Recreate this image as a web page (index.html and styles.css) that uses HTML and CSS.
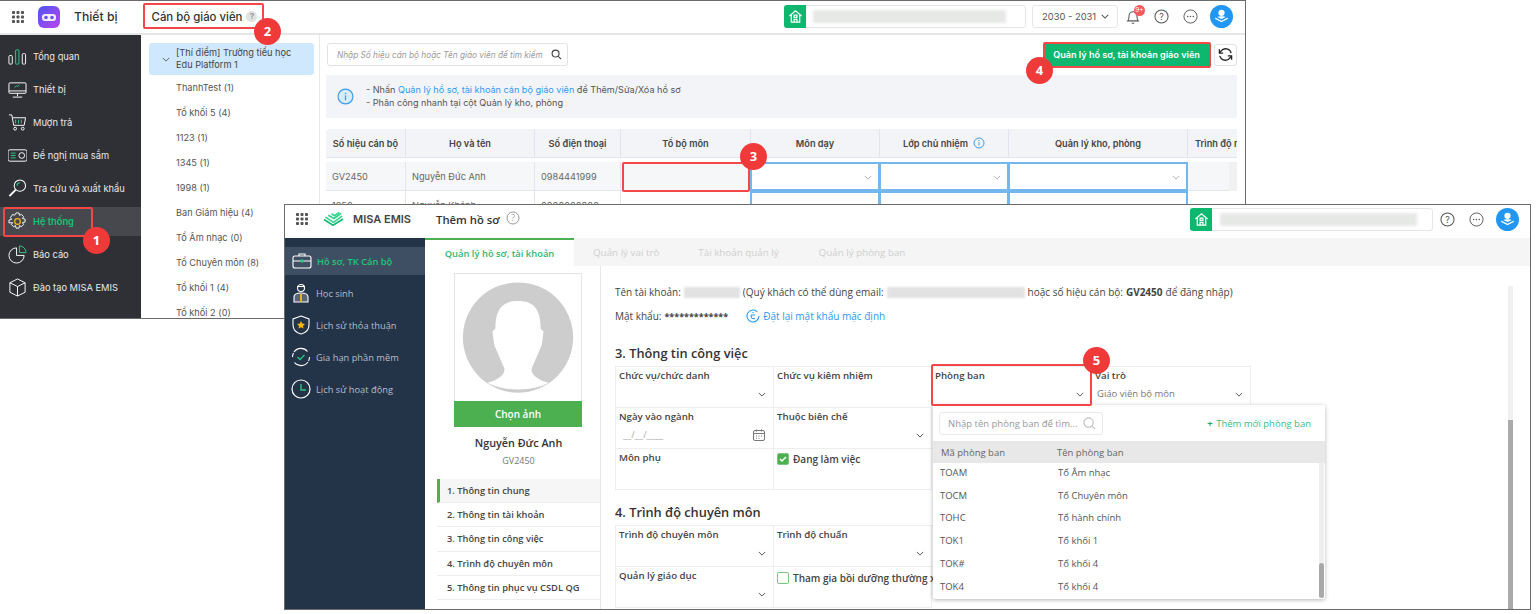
FILE: index.html
```html
<!DOCTYPE html>
<html lang="vi">
<head>
  <meta charset="UTF-8">
  <meta name="viewport" content="width=device-width, initial-scale=1.0">
  <title>Cán bộ giáo viên - Thêm hồ sơ</title>
  <link rel="stylesheet" href="styles.css">
</head>
<body>
  <!-- Cua so 1: Thiet bi -->
  <section class="win win-back">
    <header class="top top-back">
      <svg class="dots" viewBox="0 0 12 12"><g fill="#555"><rect width="3" height="3" rx=".8"/><rect x="4.500" width="3" height="3" rx=".8"/><rect x="9" width="3" height="3" rx=".8"/><rect y="4.500" width="3" height="3" rx=".8"/><rect x="4.500" y="4.500" width="3" height="3" rx=".8"/><rect x="9" y="4.500" width="3" height="3" rx=".8"/><rect y="9" width="3" height="3" rx=".8"/><rect x="4.500" y="9" width="3" height="3" rx=".8"/><rect x="9" y="9" width="3" height="3" rx=".8"/></g></svg>
      <svg class="app-logo" viewBox="0 0 22 22">
        <defs><linearGradient id="pur" x1="0" y1="0" x2="1" y2="1"><stop offset="0" stop-color="#4f55f2"/><stop offset="1" stop-color="#b944ee"/></linearGradient></defs>
        <rect width="22" height="22" rx="6" fill="url(#pur)"/>
        <rect x="4" y="8" width="14" height="7" rx="3" fill="#fff" opacity=".9"/>
        <circle cx="8" cy="11.500" r="1.800" fill="#6a50f0"/><circle cx="14" cy="11.500" r="1.800" fill="#6a50f0"/>
      </svg>
      <span class="app-name">Thiết bị</span>
      <span class="page-title">Cán bộ giáo viên</span>
      <span class="q-dot">?</span>
      <div class="top-right">
        <div class="school">
          <span class="home"><svg viewBox="0 0 16 16" fill="none" stroke="#fff" stroke-width="1.300"><path d="M1.500 7.500 8 2l6.500 5.500M3.500 6.500V14h9V6.500"/><rect x="6.500" y="6.500" width="3" height="2.500"/><path d="M6.500 14v-3h3v3"/></svg></span>
          <span class="smudge"></span>
        </div>
        <div class="year"><span>2030 - 2031</span> <svg class="chev" viewBox="0 0 10 6"><path d="M1 1l4 4 4-4" fill="none" stroke="#555" stroke-width="1.300"/></svg></div>
        <div class="bell">
          <svg viewBox="0 0 16 18" fill="none" stroke="#555" stroke-width="1.200"><path d="M2 14c1.500-1.500 1.500-3 1.500-6a4.500 4.500 0 0 1 9 0c0 3 0 4.500 1.500 6z"/><path d="M6.500 16a1.700 1.700 0 0 0 3 0"/></svg>
          <span class="bell-count">9+</span>
        </div>
        <svg class="round-ico ico-help" viewBox="0 0 16 16"><circle cx="8" cy="8" r="7" fill="none" stroke="#555" stroke-width="1.100"/><text x="8" y="11.300" text-anchor="middle" font-size="9.500" fill="#555" font-family="Inter">?</text></svg>
        <svg class="round-ico ico-more" viewBox="0 0 16 16"><circle cx="8" cy="8" r="7" fill="none" stroke="#555" stroke-width="1"/><g fill="#555"><circle cx="5" cy="8" r=".8"/><circle cx="8" cy="8" r=".8"/><circle cx="11" cy="8" r=".8"/></g></svg>
        <svg class="user-ava" viewBox="0 0 22 22"><circle cx="11" cy="11" r="11" fill="#2196f3"/><circle cx="11" cy="7.500" r="3" fill="#fff"/><path d="M5 12l6 3 6-3v1.500l-6 3-6-3z" fill="#fff"/><path d="M7 11.500c1-1 7-1 8 0l-4 2z" fill="#fff"/></svg>
      </div>
    </header>

    <div class="body-back">
      <nav class="side-dark">
        <a class="side-item"><svg viewBox="0 0 20 20" fill="none" stroke="#fff" stroke-width="1"><rect x="1" y="9" width="3.500" height="9" rx="1"/><rect x="8" y="3" width="3.500" height="15" rx="1" stroke="#2ecc87"/><rect x="15" y="7" width="3.500" height="11" rx="1"/></svg>Tổng quan</a>
        <a class="side-item"><svg viewBox="0 0 20 20" fill="none" stroke="#fff" stroke-width="1"><rect x="1" y="3" width="18" height="11" rx="1"/><path d="M1 11.500h18M10 14v3M5 18h10"/><path d="M7 8l2-2 1 1 2-2" stroke="#2ecc87"/></svg>Thiết bị</a>
        <a class="side-item"><svg viewBox="0 0 20 20" fill="none" stroke="#fff" stroke-width="1"><path d="M1 2h3l2 11h11l1.500-8H5"/><path d="M8 7v4M11 7v4M14 7v4" stroke="#2ecc87"/><circle cx="7.500" cy="16.500" r="1.500"/><circle cx="15.500" cy="16.500" r="1.500"/></svg>Mượn trả</a>
        <a class="side-item"><svg viewBox="0 0 20 20" fill="none" stroke="#fff" stroke-width="1"><rect x="0" y="4" width="20" height="12" rx="2"/><circle cx="14.500" cy="10" r="3"/><path d="M3 7.500h5M3 10h5M3 12.500h5" stroke="#2ecc87"/></svg>Đề nghị mua sắm</a>
        <a class="side-item"><svg viewBox="0 0 20 20" fill="none" stroke="#fff" stroke-width="1.100"><circle cx="12.500" cy="7" r="6"/><path d="M8 11.500 1.500 18" stroke-width="2"/><path d="M9.500 7a3 3 0 0 1 3-3" stroke="#2ecc87"/></svg>Tra cứu và xuất khẩu</a>
        <a class="side-item is-on"><svg viewBox="0 0 20 20" fill="none" stroke="#fff" stroke-width="1"><path d="M8.500 1h3l.6 2.500 2-1 2.300 2.300-1.200 2 2.800.7v3l-2.800.700 1.200 2-2.300 2.300-2-1.200-.6 2.700h-3l-.6-2.700-2 1.200-2.300-2.300 1.200-2L1 11.500v-3l2.800-.7-1.200-2L4.900 2.500l2 1z"/><circle cx="10" cy="10" r="3" stroke="#f5b50f" stroke-width="1.300"/></svg>Hệ thống</a>
        <a class="side-item"><svg viewBox="0 0 20 20" fill="none" stroke="#fff" stroke-width="1"><path d="M9 3a8 8 0 1 0 8 8H9z"/><path d="M12 1a7 7 0 0 1 7 7h-7z" stroke="#2ecc87"/></svg>Báo cáo</a>
        <a class="side-item"><svg viewBox="0 0 20 20" fill="none" stroke="#fff" stroke-width="1"><path d="M10 1l8 4v10l-8 4-8-4V5z"/><path d="M2 5l8 4 8-4M10 9v10"/></svg>Đào tạo MISA EMIS</a>
      </nav>

      <aside class="tree">
        <div class="tree-root">
          <svg class="chev" viewBox="0 0 10 6"><path d="M1 1l4 4 4-4" fill="none" stroke="#555" stroke-width="1.100"/></svg>
          <span>[Thí điểm] Trường tiểu học Edu Platform 1</span>
        </div>
        <ul class="tree-list">
          <li>ThanhTest (1)</li>
          <li>Tổ khối 5 (4)</li>
          <li>1123 (1)</li>
          <li>1345 (1)</li>
          <li>1998 (1)</li>
          <li>Ban Giám hiệu (4)</li>
          <li>Tổ Âm nhạc (0)</li>
          <li>Tổ Chuyên môn (8)</li>
          <li>Tổ khối 1 (4)</li>
          <li>Tổ khối 2 (0)</li>
        </ul>
      </aside>

      <main class="main-back">
        <div class="tools">
          <div class="search-box">
            <span>Nhập Số hiệu cán bộ hoặc Tên giáo viên để tìm kiếm</span>
            <svg viewBox="0 0 12 12" fill="none" stroke="#444" stroke-width="1.200"><circle cx="5" cy="5" r="3.800"/><path d="M8 8l3 3"/></svg>
          </div>
          <button class="btn-green">Quản lý hồ sơ, tài khoản giáo viên</button>
          <button class="btn-refresh"><svg viewBox="0 0 16 16" fill="none" stroke="#222" stroke-width="1.400"><path d="M14 6.500A6 6 0 0 0 3.200 4.500L1.500 6.500M2 9.500a6 6 0 0 0 10.800 2l1.700-2"/><path d="M1.500 2.500v4h4M14.500 13.500v-4h-4"/></svg></button>
        </div>
        <div class="info">
          <svg viewBox="0 0 16 16"><circle cx="8" cy="8" r="7" fill="#d8ecfd" stroke="#3b9df0" stroke-width="1.100"/><rect x="7.400" y="7" width="1.200" height="4.500" fill="#3b9df0"/><rect x="7.400" y="4.600" width="1.200" height="1.300" fill="#3b9df0"/></svg>
          <div>
            <p>- Nhấn <span class="link">Quản lý hồ sơ, tài khoản cán bộ giáo viên</span> để Thêm/Sửa/Xóa hồ sơ</p>
            <p>- Phân công nhanh tại cột Quản lý kho, phòng</p>
          </div>
        </div>
        <div class="tbl">
          <div class="th">Số hiệu cán bộ</div>
          <div class="th">Họ và tên</div>
          <div class="th">Số điện thoại</div>
          <div class="th">Tổ bộ môn</div>
          <div class="th">Môn dạy</div>
          <div class="th">Lớp chủ nhiệm <svg class="i-small" viewBox="0 0 12 12"><circle cx="6" cy="6" r="5" fill="none" stroke="#3b9df0"/><rect x="5.500" y="5" width="1" height="3.500" fill="#3b9df0"/><rect x="5.500" y="3" width="1" height="1" fill="#3b9df0"/></svg></div>
          <div class="th">Quản lý kho, phòng</div>
          <div class="th th-cut">Trình độ n</div>

          <div class="td">GV2450</div>
          <div class="td">Nguyễn Đức Anh</div>
          <div class="td">0984441999</div>
          <div class="td"></div>
          <div class="td td-sel"><svg class="chev" viewBox="0 0 10 6"><path d="M1 1l4 4 4-4" fill="none" stroke="#aaa" stroke-width="1.100"/></svg></div>
          <div class="td td-sel"><svg class="chev" viewBox="0 0 10 6"><path d="M1 1l4 4 4-4" fill="none" stroke="#aaa" stroke-width="1.100"/></svg></div>
          <div class="td td-sel"><svg class="chev" viewBox="0 0 10 6"><path d="M1 1l4 4 4-4" fill="none" stroke="#aaa" stroke-width="1.100"/></svg></div>
          <div class="td td-last"><span class="tbl-scroll"></span></div>

          <div class="td td-2">1250</div>
          <div class="td td-2">Nguyễn Khánh</div>
          <div class="td td-2">0000000000</div>
          <div class="td td-2"></div>
          <div class="td td-sel td-2"></div>
          <div class="td td-sel td-2"></div>
          <div class="td td-sel td-2"></div>
          <div class="td td-2 td-last"></div>
        </div>
      </main>
    </div>
  </section>

  <!-- Cua so 2: Them ho so -->
  <section class="win win-front">
    <header class="top top-front">
      <svg class="dots" viewBox="0 0 12 12"><g fill="#555"><rect width="3" height="3" rx=".8"/><rect x="4.500" width="3" height="3" rx=".8"/><rect x="9" width="3" height="3" rx=".8"/><rect y="4.500" width="3" height="3" rx=".8"/><rect x="4.500" y="4.500" width="3" height="3" rx=".8"/><rect x="9" y="4.500" width="3" height="3" rx=".8"/><rect y="9" width="3" height="3" rx=".8"/><rect x="4.500" y="9" width="3" height="3" rx=".8"/><rect x="9" y="9" width="3" height="3" rx=".8"/></g></svg>
      <svg class="misa-logo" viewBox="0 0 22 16" fill="none" stroke-width="1.700"><path d="M1 8.500l9.500 6L21 8" stroke="#14b873"/><path d="M2.500 6l8.500 5.500L20 5" stroke="#2fd18c"/><path d="M5.500 4l6 3.500L19 2" stroke="#2fd18c"/><path d="M9 2.500l3 2L17 1" stroke="#2fd18c"/></svg>
      <span class="misa-name">MISA EMIS</span>
      <span class="add-title">Thêm hồ sơ</span>
      <svg class="add-q" viewBox="0 0 14 14"><circle cx="7" cy="7" r="6" fill="none" stroke="#999" stroke-width="1"/><text x="7" y="10" text-anchor="middle" font-size="8.500" fill="#999" font-family="Open Sans">?</text></svg>
      <div class="top-right">
        <div class="school school-front">
          <span class="home"><svg viewBox="0 0 16 16" fill="none" stroke="#fff" stroke-width="1.300"><path d="M1.500 7.500 8 2l6.500 5.500M3.500 6.500V14h9V6.500"/><rect x="6.500" y="6.500" width="3" height="2.500"/><path d="M6.500 14v-3h3v3"/></svg></span>
          <span class="smudge"></span>
        </div>
        <svg class="round-ico ico-help" viewBox="0 0 16 16"><circle cx="8" cy="8" r="7" fill="none" stroke="#555" stroke-width="1.100"/><text x="8" y="11.300" text-anchor="middle" font-size="9.500" fill="#555" font-family="Inter">?</text></svg>
        <svg class="round-ico ico-more" viewBox="0 0 16 16"><circle cx="8" cy="8" r="7" fill="none" stroke="#555" stroke-width="1"/><g fill="#555"><circle cx="5" cy="8" r=".8"/><circle cx="8" cy="8" r=".8"/><circle cx="11" cy="8" r=".8"/></g></svg>
        <svg class="user-ava" viewBox="0 0 22 22"><circle cx="11" cy="11" r="11" fill="#2196f3"/><circle cx="11" cy="7.500" r="3" fill="#fff"/><path d="M5 12l6 3 6-3v1.500l-6 3-6-3z" fill="#fff"/><path d="M7 11.500c1-1 7-1 8 0l-4 2z" fill="#fff"/></svg>
      </div>
    </header>

    <div class="body-front">
      <nav class="side-navy">
        <a class="navy-item is-on"><svg viewBox="0 0 20 18" fill="none" stroke="#fff" stroke-width="1.100"><rect x="1" y="4" width="18" height="12" rx="2"/><path d="M7 4V2h6v2M1 9h18"/><circle cx="10" cy="9" r="1.200" fill="#27c77f" stroke="#27c77f"/></svg>Hồ sơ, TK Cán bộ</a>
        <a class="navy-item"><svg viewBox="0 0 20 20" fill="none" stroke="#fff" stroke-width="1.100"><circle cx="10" cy="5" r="3.500"/><path d="M6 3.500h8"/><path d="M3 19v-5c0-3 3-4 7-4s7 1 7 4v5z" fill="#fff" fill-opacity=".25"/><path d="M9 11h2v8H9z" fill="#e7b416" stroke="none"/></svg>Học sinh</a>
        <a class="navy-item"><svg viewBox="0 0 20 20" fill="none" stroke="#fff" stroke-width="1.100"><path d="M10 1l8 3v6c0 5-4 8-8 9-4-1-8-4-8-9V4z"/><path d="M10 6l1.200 2.500 2.800.4-2 2 .5 2.700L10 12.300l-2.500 1.300.5-2.700-2-2 2.800-.4z" fill="#f5b50f" stroke="none"/></svg>Lịch sử thỏa thuận</a>
        <a class="navy-item"><svg viewBox="0 0 20 20" fill="none" stroke="#fff" stroke-width="1.100"><path d="M16.500 4.500A8.500 8.500 0 0 0 3 5M3.500 15.500A8.500 8.500 0 0 0 17 15"/><path d="M1.500 10a8.500 8.500 0 0 1 1-4M18.500 10a8.500 8.500 0 0 1-1 4"/><path d="M6.500 10l2.500 2.500 4.500-4.500" stroke="#27c77f" stroke-width="1.300"/></svg>Gia hạn phần mềm</a>
        <a class="navy-item"><svg viewBox="0 0 20 20" fill="none" stroke="#fff" stroke-width="1.200"><circle cx="10" cy="10" r="9"/><path d="M10 5v6h5" stroke="#27c77f" stroke-width="1.400"/></svg>Lịch sử hoạt động</a>
      </nav>

      <div class="content">
        <div class="tabs">
          <span class="tab is-on">Quản lý hồ sơ, tài khoản</span>
          <span class="tab tab-2">Quản lý vai trò</span>
          <span class="tab tab-3">Tài khoản quản lý</span>
          <span class="tab tab-4">Quản lý phòng ban</span>
        </div>
        <div class="panes">
          <div class="profile">
            <div class="photo">
              <svg viewBox="0 0 128 128"><circle cx="64" cy="64" r="56" fill="#cdcdcd"/><path d="M33 110c8-2 19-8 17-15L40 72l-2-14 3-3c0-20 7-28 23-28s23 8 23 28l3 3-2 14-10 23c-2 7 9 13 17 15-15 9-47 9-62 0z" fill="#fff"/></svg>
            </div>
            <button class="btn-photo">Chọn ảnh</button>
            <div class="person">Nguyễn Đức Anh</div>
            <div class="person-id">GV2450</div>
            <ul class="steps">
              <li class="is-on">1. Thông tin chung</li>
              <li>2. Thông tin tài khoản</li>
              <li>3. Thông tin công việc</li>
              <li>4. Trình độ chuyên môn</li>
              <li>5. Thông tin phục vụ CSDL QG</li>
            </ul>
          </div>

          <div class="form">
            <p class="acc-line">Tên tài khoản: <span class="mask mask-a"></span> (Quý khách có thể dùng email: <span class="mask mask-b"></span> hoặc số hiệu cán bộ: <b>GV2450</b> để đăng nhập)</p>
            <p class="pass-line">Mật khẩu: <b class="stars">*************</b>
              <span class="reset"><svg viewBox="0 0 14 14" fill="none" stroke="#2b9af3" stroke-width="1.100"><path d="M11.500 3A6 6 0 1 0 13 7"/><path d="M7 3v1M5 6h4M5 6c0 3 1 4 4 3.500"/></svg>Đặt lại mật khẩu mặc định</span></p>

            <h3 class="sec-1">3. Thông tin công việc</h3>
            <div class="fields">
              <div class="field"><label>Chức vụ/chức danh</label><svg class="chev" viewBox="0 0 10 6"><path d="M1 1l4 4 4-4" fill="none" stroke="#555" stroke-width="1.200"/></svg></div>
              <div class="field"><label>Chức vụ kiêm nhiệm</label></div>
              <div class="field"><label>Phòng ban</label><svg class="chev" viewBox="0 0 10 6"><path d="M1 1l4 4 4-4" fill="none" stroke="#555" stroke-width="1.200"/></svg></div>
              <div class="field"><label>Vai trò</label><span class="val">Giáo viên bộ môn</span><svg class="chev" viewBox="0 0 10 6"><path d="M1 1l4 4 4-4" fill="none" stroke="#555" stroke-width="1.200"/></svg></div>

              <div class="field"><label>Ngày vào ngành</label><span class="val val-date">__/__/____</span>
                <svg class="cal" viewBox="0 0 12 12" fill="none" stroke="#777"><rect x=".5" y="1.500" width="11" height="10" rx="1.500"/><path d="M.5 4.500h11M3.500 .5v2M8.500 .5v2"/><path d="M3 7h1M5.500 7h1M8 7h1M3 9.300h1M5.500 9.300h1"/></svg></div>
              <div class="field"><label>Thuộc biên chế</label><svg class="chev" viewBox="0 0 10 6"><path d="M1 1l4 4 4-4" fill="none" stroke="#555" stroke-width="1.200"/></svg></div>
              <div class="field"></div>
              <div class="field"></div>

              <div class="field"><label>Môn phụ</label></div>
              <div class="field field-check"><span class="check is-on"><svg viewBox="0 0 10 10"><path d="M2 5l2 2 4-4" fill="none" stroke="#fff" stroke-width="1.500"/></svg></span>Đang làm việc</div>
            </div>

            <h3 class="sec-2">4. Trình độ chuyên môn</h3>
            <div class="fields">
              <div class="field"><label>Trình độ chuyên môn</label><svg class="chev" viewBox="0 0 10 6"><path d="M1 1l4 4 4-4" fill="none" stroke="#555" stroke-width="1.200"/></svg></div>
              <div class="field"><label>Trình độ chuẩn</label><svg class="chev" viewBox="0 0 10 6"><path d="M1 1l4 4 4-4" fill="none" stroke="#555" stroke-width="1.200"/></svg></div>
              <div class="field"></div>
              <div class="field"></div>
              <div class="field"><label>Quản lý giáo dục</label><svg class="chev" viewBox="0 0 10 6"><path d="M1 1l4 4 4-4" fill="none" stroke="#555" stroke-width="1.200"/></svg></div>
              <div class="field field-check field-check-2"><span class="check"></span><span class="nowrap">Tham gia bồi dưỡng thường xuyên</span></div>
            </div>
          </div>
          <div class="pane-scroll"><span></span></div>
        </div>
      </div>
    </div>
  </section>

  <!-- Menu phong ban -->
  <div class="drop">
    <div class="drop-top">
      <div class="drop-search">
        <span>Nhập tên phòng ban để tìm...</span>
        <svg viewBox="0 0 14 14" fill="none" stroke="#bbb" stroke-width="1.200"><circle cx="6" cy="6" r="5"/><path d="M10 10l3 3"/></svg>
      </div>
      <span class="drop-add"><b>+</b> Thêm mới phòng ban</span>
    </div>
    <div class="drop-row drop-head"><span>Mã phòng ban</span><span>Tên phòng ban</span></div>
    <div class="drop-row"><span>TOAM</span><span>Tổ Âm nhạc</span></div>
    <div class="drop-row"><span>TOCM</span><span>Tổ Chuyên môn</span></div>
    <div class="drop-row"><span>TOHC</span><span>Tổ hành chính</span></div>
    <div class="drop-row"><span>TOK1</span><span>Tổ khối 1</span></div>
    <div class="drop-row"><span>TOK#</span><span>Tổ khối 4</span></div>
    <div class="drop-row"><span>TOK4</span><span>Tổ khối 4</span></div>
    <span class="drop-track"><span class="drop-thumb"></span></span>
  </div>

  <!-- Khung do va so thu tu -->
  <span class="box box-1"></span>
  <span class="box box-2"></span>
  <span class="box box-3"></span>
  <span class="box box-4"></span>
  <span class="box box-5"></span>
  <span class="mark mark-1">1</span>
  <span class="mark mark-2">2</span>
  <span class="mark mark-3">3</span>
  <span class="mark mark-4">4</span>
  <span class="mark mark-5">5</span>
</body>
</html>
```

FILE: styles.css
```css
* {
  box-sizing: border-box;
}

html, body {
  margin: 0;
  height: 614px;
  overflow: hidden;
  background: #fff;
}

body {
  position: relative;
  width: 1536px;
  font-family: Inter, "Liberation Sans", sans-serif;
  color: #444;
}

p, ul, h3 {
  margin: 0;
  padding: 0;
}

ul {
  list-style: none;
}

button {
  font: inherit;
  border: 0;
  padding: 0;
}

/* cua so */
.win {
  position: absolute;
  background: #fff;
  overflow: hidden;
  display: flex;
  flex-direction: column;
  border: 1px solid #6b6b6b;
}

.win-back {
  left: -1px;
  top: 0;
  width: 1247px;
  height: 319px;
}

.win-front {
  left: 284px;
  top: 204px;
  width: 1247px;
  height: 406px;
  font-family: "Open Sans", sans-serif;
}

/* thanh tren */
.top {
  display: flex;
  align-items: center;
  flex: none;
  background: #fff;
  white-space: nowrap;
}

.top-back {
  height: 34px;
  padding: 0 0 1px 12px;
  border-bottom: 2px solid #e6e6e6;
}

.top-front {
  height: 33px;
  padding: 0 0 5px 11px;
}

.dots {
  width: 12px;
  height: 12px;
  flex: none;
}

.app-logo {
  width: 22px;
  height: 22px;
  margin-left: 14px;
}

.app-name {
  margin-left: 14px;
  font-size: 12.200px;
  font-weight: 500;
  color: #333;
}

.page-title {
  margin-left: 34px;
  font-size: 11.400px;
  font-weight: 500;
  color: #333;
}

.q-dot {
  width: 11px;
  height: 11px;
  margin-left: 4px;
  border-radius: 50%;
  background: #e2e2e2;
  color: #999;
  font-size: 8px;
  font-weight: 700;
  line-height: 11px;
  text-align: center;
}

.misa-logo {
  width: 21px;
  height: 16px;
  margin-left: 15px;
}

.misa-name {
  margin-left: 9px;
  font-family: Inter, sans-serif;
  font-size: 11px;
  font-weight: 600;
  color: #444;
}

.add-title {
  margin-left: 25px;
  font-size: 11.300px;
  font-weight: 600;
  color: #333;
}

.add-q {
  width: 14px;
  height: 14px;
  margin-left: 6px;
  margin-bottom: 2px;
}

.top-right {
  display: flex;
  align-items: center;
  margin-left: auto;
}

.school {
  display: flex;
  align-items: center;
  width: 242px;
  height: 23px;
  border: 1px solid #e6e6e6;
  border-radius: 3px;
}

.school-front {
  width: 243px;
}

.home {
  display: flex;
  align-items: center;
  justify-content: center;
  flex: none;
  width: 22px;
  height: 23px;
  margin: -1px 0 -1px -1px;
  border-radius: 3px 0 0 3px;
  background: #0db86e;
}

.home svg {
  width: 15px;
  height: 15px;
}

.smudge {
  width: 193px;
  height: 13px;
  margin-left: 7px;
  background: #e6e8e6;
  filter: blur(1.500px);
}

.school-front .smudge {
  width: 197px;
  margin-left: 8px;
}

.year {
  display: flex;
  align-items: center;
  justify-content: space-between;
  width: 86px;
  height: 23px;
  margin-left: 6px;
  padding: 0 8px 0 9px;
  border: 1px solid #e6e6e6;
  border-radius: 3px;
  font-size: 9.400px;
  color: #555;
}

.chev {
  width: 8px;
  height: 5px;
}

.bell {
  position: relative;
  width: 14px;
  height: 17px;
  margin-left: 8px;
}

.bell svg {
  display: block;
  width: 14px;
  height: 17px;
}

.bell-count {
  position: absolute;
  left: 8px;
  top: -3px;
  width: 11px;
  height: 11px;
  border-radius: 50%;
  background: #f45a5a;
  color: #fff;
  font-size: 6.500px;
  line-height: 11px;
  text-align: center;
}

.round-ico {
  width: 15px;
  height: 15px;
}

.ico-help {
  margin-left: 14px;
}

.ico-more {
  margin-left: 14px;
}

.user-ava {
  width: 23px;
  height: 23px;
  margin-left: 12px;
  margin-right: 12px;
}

.top-front .ico-help {
  margin-left: 7px;
}

.top-front .user-ava {
  margin-right: 11px;
  margin-left: 12px;
}

/* cua so sau */
.body-back {
  display: flex;
  flex: 1;
  min-height: 0;
}

.side-dark {
  flex: none;
  width: 141px;
  padding-top: 5px;
  background: #2f3036;
}

.side-item {
  display: flex;
  align-items: center;
  gap: 6px;
  height: 33px;
  padding-left: 8px;
  font-size: 9.300px;
  color: #e8e8e8;
  white-space: nowrap;
}

.side-item svg {
  width: 19px;
  height: 19px;
  flex: none;
}

.side-item.is-on {
  height: 29px;
  margin: 2px 0;
  background: #47484d;
  color: #12c574;
  font-weight: 600;
}

.tree {
  flex: none;
  width: 179px;
  padding: 8px 5px 0 8px;
  border-right: 1px solid #e8e8e8;
  font-size: 9.200px;
  color: #555;
}

.tree-root {
  display: flex;
  align-items: center;
  height: 32px;
  padding: 0 8px 0 13px;
  border-radius: 3px;
  background: #cfe8fd;
  line-height: 12.500px;
  color: #444;
}

.tree-root .chev {
  flex: none;
  margin-right: 6px;
}

.tree-list li {
  height: 25px;
  padding-left: 27px;
  line-height: 25px;
  white-space: nowrap;
}

.main-back {
  flex: 1;
  min-width: 0;
  padding: 8px 8px 0 6px;
}

.tools {
  display: flex;
  align-items: center;
  height: 23px;
}

.search-box {
  display: flex;
  align-items: center;
  justify-content: space-between;
  width: 241px;
  height: 23px;
  margin-left: 1px;
  padding: 0 5px 0 9px;
  border: 1px solid #e2e2e2;
  border-radius: 3px;
  font-size: 8.250px;
  font-style: italic;
  color: #9a9a9a;
  white-space: nowrap;
}

.search-box svg {
  width: 11px;
  height: 11px;
  flex: none;
}

.btn-green {
  width: 165px;
  height: 23px;
  margin-left: auto;
  background: #0db86e;
  color: #fff;
  font-size: 9.100px;
  font-weight: 600;
  white-space: nowrap;
}

.btn-refresh {
  display: flex;
  align-items: center;
  justify-content: center;
  width: 23px;
  height: 22px;
  margin-left: 5px;
  background: #fff;
  border: 1px solid #e2e2e2;
  border-radius: 3px;
}

.btn-refresh svg {
  width: 15px;
  height: 15px;
}

.info {
  display: flex;
  align-items: center;
  height: 43px;
  margin-top: 9px;
  padding-left: 11px;
  background: #f3f4f8;
  font-size: 9.100px;
  line-height: 12.500px;
  color: #555;
}

.info svg {
  width: 17px;
  height: 17px;
  margin-right: 12px;
  flex: none;
}

.link {
  color: #2b9af3;
}

.tbl {
  display: grid;
  grid-template-columns: 80px 129px 86px 130px 129px 129px 179px 49px;
  grid-template-rows: 29px 33px 30px;
  margin-top: 11px;
  overflow: hidden;
  font-size: 9.200px;
}

.th {
  display: flex;
  align-items: center;
  justify-content: center;
  gap: 5px;
  padding-top: 1px;
  background: #f3f4f8;
  border-right: 1px solid #e2e4ef;
  border-bottom: 1px solid #e2e4ef;
  font-weight: 600;
  color: #444;
  white-space: nowrap;
}

.th:first-child {
  border-radius: 4px 0 0 0;
}

.th-cut {
  justify-content: flex-start;
  padding-left: 7px;
  overflow: hidden;
  border-right: 0;
}

.i-small {
  width: 12px;
  height: 12px;
  margin-bottom: 2px;
}

.td {
  display: flex;
  align-items: center;
  margin-top: 4px;
  padding: 1px 0 0 6px;
  background: #f6f7f9;
  border-right: 1px solid #e4e6ef;
  border-bottom: 1px solid #e4e6ef;
  color: #666;
  white-space: nowrap;
}

.td-2 {
  background: #fff;
  margin-top: 0;
  align-items: flex-start;
  padding-top: 9px;
}

.td-sel {
  justify-content: flex-end;
  padding-right: 6px;
  background: #fff;
  border: 2px solid #74b7ee;
  margin-left: -1px;
}

.td-last {
  position: relative;
  border-right: 0;
}

.tbl-scroll {
  position: absolute;
  right: 0;
  top: 0;
  width: 8px;
  height: 60px;
  background: #f1f1f1;
}

/* cua so truoc */
.body-front {
  display: flex;
  flex: 1;
  min-height: 0;
}

.side-navy {
  display: flex;
  flex-direction: column;
  gap: 4px;
  flex: none;
  width: 140px;
  padding-top: 9px;
  background: #233348;
}

.navy-item {
  display: flex;
  align-items: center;
  gap: 5px;
  height: 28px;
  padding-left: 6px;
  font-size: 9.300px;
  color: #b6bec8;
  white-space: nowrap;
}

.navy-item svg {
  width: 20px;
  height: 20px;
  flex: none;
}

.navy-item.is-on {
  padding-left: 7px;
  background: #3f4f63;
  color: #21c777;
  font-weight: 600;
}

.content {
  display: flex;
  flex-direction: column;
  flex: 1;
  min-width: 0;
}

.tabs {
  display: flex;
  flex: none;
  height: 28px;
  background: #f5f5f5;
  font-size: 9.800px;
  color: #cfcfcf;
}

.tab {
  line-height: 29px;
  white-space: nowrap;
}

.tab.is-on {
  width: 149px;
  margin-left: 0;
  border-top: 2px solid #4caf50;
  background: #fff;
  color: #2fb671;
  font-size: 9.400px;
  font-weight: 600;
  text-align: center;
  line-height: 27px;
}

.tab-2 {
  margin-left: 19px;
}

.tab-3 {
  margin-left: 39px;
}

.tab-4 {
  margin-left: 40px;
}

.panes {
  display: flex;
  flex: 1;
  min-height: 0;
}

.profile {
  flex: none;
  width: 176px;
  padding: 7px 0 0 12px;
  border-right: 1px solid #e6e6e6;
  text-align: center;
}

.photo {
  width: 128px;
  height: 128px;
  margin-left: 17px;
  border: 1px solid #e4e4e4;
  border-bottom: 0;
}

.photo svg {
  display: block;
  width: 126px;
  height: 127px;
}

.btn-photo {
  display: block;
  width: 128px;
  height: 26px;
  margin-left: 17px;
  background: #4caf50;
  color: #fff;
  font-size: 10px;
  font-weight: 600;
}

.person {
  margin-top: 8px;
  font-size: 10.800px;
  font-weight: 600;
  color: #333;
  line-height: 16px;
}

.person-id {
  margin-top: 3px;
  font-size: 9px;
  line-height: 14px;
  color: #777;
}

.steps {
  margin-top: 11px;
  text-align: left;
  font-size: 9.300px;
  font-weight: 600;
  color: #444;
}

.steps li {
  height: 24.200px;
  padding-left: 10px;
  border-bottom: 1px solid #eee;
  line-height: 23px;
  white-space: nowrap;
}

.steps li.is-on {
  background: #f6f6f6;
  border-left: 3px solid #4caf50;
  padding-left: 7px;
}

.form {
  flex: none;
  width: 910px;
  padding: 19px 0 0 14px;
  font-size: 10px;
  color: #444;
  white-space: nowrap;
}

.acc-line, .pass-line {
  display: flex;
  align-items: center;
  gap: 3px;
  height: 14px;
}

.pass-line {
  margin-top: 10px;
}

.mask {
  display: inline-block;
  height: 11px;
  background: #e2e2e2;
  filter: blur(1px);
}

.mask-a {
  width: 56px;
}

.mask-b {
  width: 138px;
}

.stars {
  font-size: 9px;
  font-weight: 700;
}

.reset {
  display: inline-flex;
  align-items: center;
  gap: 3px;
  margin-left: 15px;
  color: #2b9af3;
}

.reset svg {
  width: 14px;
  height: 14px;
}

.form h3 {
  font-size: 12.800px;
  font-weight: 600;
  line-height: 18px;
  color: #333;
}

.sec-1 {
  margin-top: 21px;
}

.sec-2 {
  margin-top: 14px;
  margin-bottom: 2px;
}

.fields {
  display: grid;
  grid-template-columns: 158px 158px 160px 159px;
  grid-auto-rows: 41px;
  width: 635px;
  margin-top: 4px;
}

.field {
  position: relative;
  padding: 2px 3px 0 3px;
  border: 1px solid #eee;
  margin: 0 -1px -1px 0;
}

.field label {
  display: block;
  font-size: 9.700px;
  font-weight: 600;
  line-height: 14px;
  color: #444;
}

.field .chev {
  position: absolute;
  right: 7px;
  bottom: 10px;
}

.val {
  display: block;
  margin-top: 4px;
  margin-left: 2px;
  color: #777;
  font-size: 9.500px;
}

.val-date {
  padding-left: 2px;
  color: #aaa;
}

.cal {
  position: absolute;
  right: 8px;
  bottom: 7px;
  width: 12px;
  height: 12px;
}

.field-check {
  display: flex;
  align-items: flex-start;
  gap: 4px;
  padding-top: 3px;
  font-size: 10px;
  font-weight: 600;
  color: #444;
}

.field-check-2 {
  padding-top: 4px;
}

.check {
  display: flex;
  align-items: center;
  justify-content: center;
  flex: none;
  width: 12px;
  height: 12px;
  margin-top: 1px;
  border: 1px solid #7cc47f;
  border-radius: 2px;
}

.check.is-on {
  background: #4caf50;
}

.check svg {
  width: 10px;
  height: 10px;
}

.nowrap {
  white-space: nowrap;
}

.pane-scroll {
  position: relative;
  flex: none;
  width: 5px;
  margin: 20px 0 0 -3px;
  background: #f0f0f0;
}

.pane-scroll span {
  position: absolute;
  left: 0;
  right: 0;
  top: 134px;
  bottom: 0;
  background: #aaa;
}

/* menu phong ban */
.drop {
  position: absolute;
  left: 933px;
  top: 405px;
  width: 392px;
  height: 194px;
  background: #fff;
  border-radius: 2px;
  box-shadow: 0 1px 4px rgba(0, 0, 0, .3);
  font-family: "Open Sans", sans-serif;
  font-size: 9.500px;
  color: #555;
}

.drop-top {
  display: flex;
  align-items: center;
  justify-content: space-between;
  height: 36px;
  padding: 0 14px 0 6px;
}

.drop-search {
  display: flex;
  align-items: center;
  justify-content: space-between;
  width: 164px;
  height: 23px;
  padding: 0 6px 0 8px;
  border: 1px solid #e8eaf0;
  border-radius: 3px;
  color: #999;
  white-space: nowrap;
}

.drop-search svg {
  width: 13px;
  height: 13px;
}

.drop-add {
  color: #39bd7e;
}

.drop-add b {
  margin-right: 1px;
  color: #1eaa64;
}

.drop-row {
  display: flex;
  align-items: center;
  height: 22.800px;
  padding-left: 7px;
}

.drop-row span:first-child {
  width: 118px;
}

.drop-head {
  height: 22px;
  background: #e8e8e8;
  color: #666;
  padding-left: 8px;
  margin-bottom: -2px;
}

.drop-head span:first-child {
  width: 116px;
}

.drop-track {
  position: absolute;
  right: 1px;
  top: 58px;
  bottom: 1px;
  width: 5px;
  background: #eee;
}

.drop-thumb {
  position: absolute;
  left: 0;
  bottom: 0;
  width: 5px;
  height: 35px;
  border-radius: 3px;
  background: #a9a9a9;
}

/* khung do, so thu tu */
.box {
  position: absolute;
  border: 2px solid #f44848;
  border-radius: 2px;
}

.box-1 { left: 3px; top: 207px; width: 90px; height: 30px; }
.box-2 { left: 143px; top: 3px; width: 121px; height: 26px; }
.box-3 { left: 622px; top: 162px; width: 128px; height: 30px; }
.box-4 { left: 1043px; top: 42px; width: 168px; height: 26px; }
.box-5 { left: 931px; top: 364px; width: 161px; height: 42px; }

.mark {
  position: absolute;
  width: 27px;
  height: 27px;
  border-radius: 50%;
  background: #f03a3a;
  color: #fff;
  font-family: "Open Sans", sans-serif;
  font-size: 13px;
  font-weight: 700;
  line-height: 27px;
  text-align: center;
}

.mark-1 { left: 83px; top: 227px; }
.mark-2 { left: 254px; top: 18px; }
.mark-3 { left: 740px; top: 143px; }
.mark-4 { left: 1026px; top: 57px; }
.mark-5 { left: 1083px; top: 347px; }
```
